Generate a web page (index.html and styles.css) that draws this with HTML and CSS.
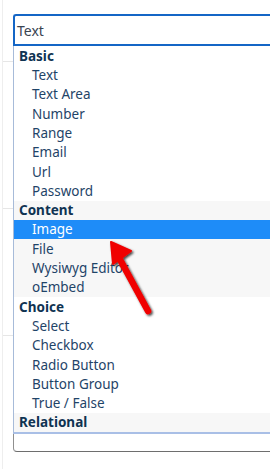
FILE: index.html
```html
<!DOCTYPE html>
<html>
<head>
<meta charset="utf-8">
<link rel="stylesheet" href="styles.css">
</head>
<body>
<div class="backdrop">
  <div class="brow r1"></div>
  <div class="brow r2"></div>
  <div class="brow r3"></div>
</div>
<div class="select">
  <div class="search">Text</div>
  <ul class="results">
    <li class="group">
      <div class="label">Basic</div>
      <div class="opt">Text</div>
      <div class="opt">Text Area</div>
      <div class="opt">Number</div>
      <div class="opt">Range</div>
      <div class="opt">Email</div>
      <div class="opt">Url</div>
      <div class="opt">Password</div>
    </li>
    <li class="group alt">
      <div class="label">Content</div>
      <div class="opt active">Image</div>
      <div class="opt">File</div>
      <div class="opt">Wysiwyg Editor</div>
      <div class="opt">oEmbed</div>
    </li>
    <li class="group">
      <div class="label">Choice</div>
      <div class="opt">Select</div>
      <div class="opt">Checkbox</div>
      <div class="opt">Radio Button</div>
      <div class="opt">Button Group</div>
      <div class="opt">True / False</div>
    </li>
    <li class="group alt">
      <div class="label">Relational</div>
    </li>
  </ul>
  <div class="foot"></div>
</div>
<svg class="arrow" width="270" height="469" viewBox="0 0 270 469">
  <defs>
    <filter id="sh" x="-50%" y="-50%" width="200%" height="200%">
      <feDropShadow dx="1.5" dy="1.5" stdDeviation="1.2" flood-color="#000" flood-opacity="0.75"/>
    </filter>
  </defs>
  <g filter="url(#sh)" fill="#f00000" stroke="#f00000">
    <line x1="117" y1="254" x2="148" y2="311" stroke-width="6.5" stroke-linecap="round"/>
    <polygon points="111,242 131,251 113,264" stroke-width="2" stroke-linejoin="round"/>
  </g>
</svg>
</body>
</html>
```
FILE: styles.css
```css
html, body {
  margin: 0;
  padding: 0;
  background: #fff;
  width: 270px;
  height: 469px;
  overflow: hidden;
  position: relative;
  font-family: "Noto Sans", "Open Sans", sans-serif;
}
.backdrop {
  margin-left: 2px;
  width: 11px;
  height: 469px;
  border-left: 1px solid #eeeeee;
}
.brow { border-bottom: 1px solid #e6e6e6; }
.r1 { height: 61px; }
.r2 { height: 146px; }
.r3 { height: 126px; }
.select {
  position: absolute;
  left: 13px;
  top: 14px;
  width: 257px;
}
.search {
  height: 28px;
  border: 2px solid #1466c6;
  border-right: none;
  border-radius: 3px 0 0 0;
  padding-left: 2px;
  font-size: 14px;
  line-height: 30px;
  color: #3a4452;
}
.results {
  list-style: none;
  margin: 0;
  padding: 0.3px 0 0 0;
  border-left: 1px solid #a7bbd9;
  border-bottom: 2px solid #a9bfe6;
}
.group.alt { background: #f7f7f7; }
.label, .opt {
  height: 17.8px;
  padding-top: 1.5px;
  line-height: 17.8px;
  font-size: 13.5px;
  white-space: nowrap;
}
.label {
  padding-left: 5px;
  font-weight: bold;
  color: #0f3352;
}
.opt {
  padding-left: 18px;
  color: #1f4468;
}
.opt.active {
  background: #1e8cf8;
  color: #fff;
}
.foot {
  height: 17px;
  border-left: 1px solid #8f8f8f;
  border-bottom: 1px solid #6e6e6e;
  border-radius: 0 0 0 4px;
}
.arrow {
  position: absolute;
  left: 0;
  top: 0;
  pointer-events: none;
}
```
